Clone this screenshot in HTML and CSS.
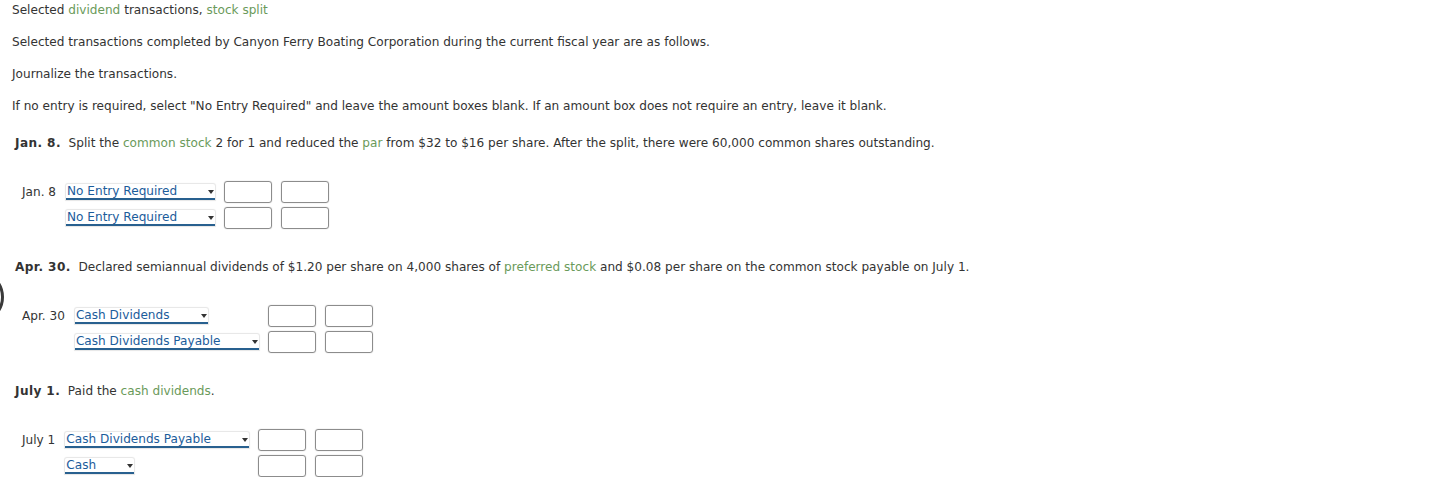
FILE: index.html
```html
<!DOCTYPE html>
<html>
<head>
<meta charset="utf-8">
<link rel="stylesheet" href="styles.css">
</head>
<body>
<div class="edge-arc"></div>
<div class="page">
  <p class="line">Selected <span class="term">dividend</span> transactions, <span class="term">stock split</span></p>
  <p class="line">Selected transactions completed by Canyon Ferry Boating Corporation during the current fiscal year are as follows.</p>
  <p class="line">Journalize the transactions.</p>
  <p class="line">If no entry is required, select "No Entry Required" and leave the amount boxes blank. If an amount box does not require an entry, leave it blank.</p>

  <section class="txn first">
    <p class="txn-head"><b>Jan. 8.</b>&nbsp; Split the <span class="term">common stock</span> 2 for 1 and reduced the <span class="term">par</span> from $32 to $16 per share. After the split, there were 60,000 common shares outstanding.</p>
    <div class="journal">
      <span class="date">Jan. 8</span>
      <span class="cell"><span class="drop">No Entry Required</span></span>
      <span class="box"></span><span class="box"></span>
      <span class="date"></span>
      <span class="cell"><span class="drop">No Entry Required</span></span>
      <span class="box"></span><span class="box"></span>
    </div>
  </section>

  <section class="txn second">
    <p class="txn-head"><b>Apr. 30.</b>&nbsp; Declared semiannual dividends of $1.20 per share on 4,000 shares of <span class="term">preferred stock</span> and $0.08 per share on the common stock payable on July 1.</p>
    <div class="journal">
      <span class="date">Apr. 30</span>
      <span class="cell"><span class="drop">Cash Dividends</span></span>
      <span class="box"></span><span class="box"></span>
      <span class="date"></span>
      <span class="cell"><span class="drop">Cash Dividends Payable</span></span>
      <span class="box"></span><span class="box"></span>
    </div>
  </section>

  <section class="txn third">
    <p class="txn-head"><b>July 1.</b>&nbsp; Paid the <span class="term">cash dividends</span>.</p>
    <div class="journal">
      <span class="date">July 1</span>
      <span class="cell"><span class="drop">Cash Dividends Payable</span></span>
      <span class="box"></span><span class="box"></span>
      <span class="date"></span>
      <span class="cell"><span class="drop">Cash</span></span>
      <span class="box"></span><span class="box"></span>
    </div>
  </section>
</div>
</body>
</html>
```

FILE: styles.css
```css
html, body {
  margin: 0;
  padding: 0;
  background: #ffffff;
}
body {
  font-family: "DejaVu Sans", Verdana, sans-serif;
  font-size: 12.1px;
  color: #333333;
  position: relative;
  overflow: hidden;
}
.page {
  padding: 2px 0 0 12px;
}
.line {
  margin: 0 0 16px 0;
  line-height: 16px;
  white-space: nowrap;
}
.term {
  color: #6a9a5a;
}
.txn {
  padding-left: 3px;
}
.txn.first {
  margin-top: 21px;
}
.txn.second {
  margin-top: 30px;
}
.txn.third {
  margin-top: 30px;
}
.txn-head {
  margin: 0;
  line-height: 16px;
  white-space: nowrap;
}
.txn-head b {
  letter-spacing: 0.4px;
}
.journal {
  display: grid;
  grid-template-columns: auto auto auto auto;
  justify-content: start;
  align-items: center;
  row-gap: 4px;
  margin-top: 30px;
  padding-left: 7px;
}
.date {
  padding-right: 10px;
}
.cell {
  display: flex;
  padding-right: 9px;
}
.drop {
  position: relative;
  display: inline-block;
  color: #1b5c9b;
  line-height: 14px;
  padding: 0 38px 0 1px;
  border-bottom: 2px solid #28608f;
  box-shadow: 0 0 1px 1px rgba(0, 0, 0, 0.1);
  border-radius: 2px 2px 0 0;
}
.drop::after {
  content: "";
  position: absolute;
  right: 1px;
  top: 6px;
  border-left: 3px solid transparent;
  border-right: 3px solid transparent;
  border-top: 4px solid #333333;
}
.box {
  display: block;
  width: 46px;
  height: 20px;
  border: 1px solid #8c8c8c;
  border-radius: 3px;
  box-shadow: 0 0 1px rgba(0, 0, 0, 0.35);
  margin-right: 9px;
}
.edge-arc {
  position: absolute;
  left: -50px;
  top: 270px;
  width: 54px;
  height: 54px;
  box-sizing: border-box;
  border: 3px solid #3a3a3a;
  border-radius: 50%;
}
```
